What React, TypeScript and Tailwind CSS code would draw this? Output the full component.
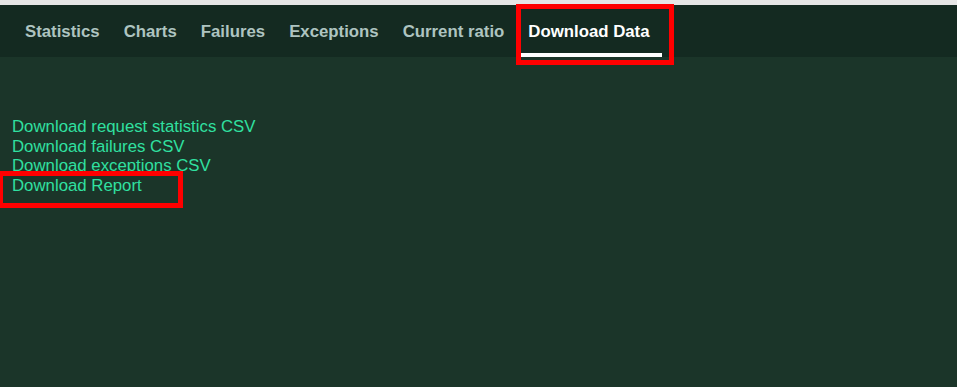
import React from "react";

const tabs = ["Statistics", "Charts", "Failures", "Exceptions", "Current ratio", "Download Data"];
const links = [
  "Download request statistics CSV",
  "Download failures CSV",
  "Download exceptions CSV",
  "Download Report",
];

export default function App() {
  return (
    <div
      className="relative w-[957px] h-[387px] overflow-hidden bg-[#1b3529]"
      style={{ fontFamily: '"Liberation Sans", Arial, sans-serif' }}
    >
      <div className="h-[5px] bg-[#e6e6e6]" />
      <div className="flex h-[52px] bg-[#142a21] pl-[13px]">
        {tabs.map((t, i) => {
          const active = i === tabs.length - 1;
          return (
            <div
              key={t}
              className={
                "relative flex items-center px-3 text-[16.8px] font-bold pt-[1px] " +
                (active ? "text-white" : "text-[#aec4c0]")
              }
            >
              {t}
              {active && <div className="absolute left-0 right-0 bottom-0 h-[4px] bg-white" />}
            </div>
          );
        })}
      </div>
      <div className="flex flex-col pl-[12px] pt-[60px]">
        {links.map((l) => (
          <a key={l} className="text-[16.8px] leading-[19.5px] text-[#30e0a0] w-fit cursor-pointer">
            {l}
          </a>
        ))}
      </div>
      <div className="absolute left-[516px] top-[4px] w-[158px] h-[61px] border-[5px] border-[#ff0000]" />
      <div className="absolute left-[-2px] top-[171px] w-[185px] h-[37px] border-[5px] border-[#ff0000]" />
    </div>
  );
}
